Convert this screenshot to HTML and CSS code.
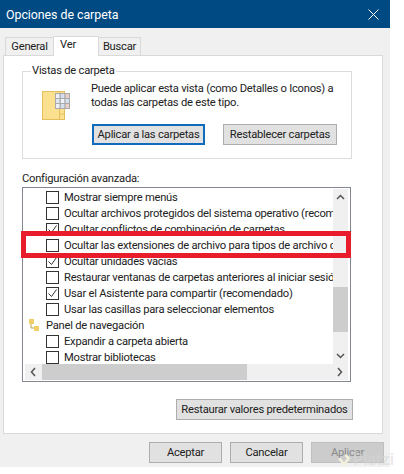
FILE: index.html
```html
<!DOCTYPE html>
<html lang="es">
<head>
    <meta charset="UTF-8">
    <title>Opciones de carpeta</title>
    <link rel="stylesheet" href="styles.css">
</head>
<body>
    <div class="window">
        <!-- Title bar -->
        <header class="titlebar">
            <span class="title">Opciones de carpeta</span>
            <svg class="close" width="11" height="11" viewBox="0 0 11 11"><path d="M.5.5l10 10M10.5.5l-10 10" stroke="#fff" stroke-width="1" fill="none"/></svg>
        </header>

        <!-- Tabs -->
        <div class="tabs">
            <span class="tab tab-general">General</span>
            <span class="tab tab-active">Ver</span>
            <span class="tab tab-buscar">Buscar</span>
        </div>

        <div class="panel">
            <!-- Folder views -->
            <fieldset class="views">
                <legend>Vistas de carpeta</legend>
                <div class="views-body">
                    <svg class="folder" width="32" height="32" viewBox="0 0 32 32">
                        <rect x="1.500" y="1.500" width="22" height="28" fill="#fbe08f" stroke="#e3c05c"/>
                        <path d="M18.500 2v27M19 24h4" stroke="#e3c05c" fill="none"/>
                        <rect x="14" y="3" width="15" height="16" fill="#a9a9a9"/>
                        <rect x="15" y="4" width="3.500" height="4" fill="#eef2f6"/><rect x="19.800" y="4" width="3.500" height="4" fill="#d5dfee"/><rect x="24.500" y="4" width="3.500" height="4" fill="#e8cfc8"/>
                        <rect x="15" y="9" width="3.500" height="4" fill="#dfe8f0"/><rect x="19.800" y="9" width="3.500" height="4" fill="#eef2f6"/><rect x="24.500" y="9" width="3.500" height="4" fill="#d5dfee"/>
                        <rect x="15" y="14" width="3.500" height="4" fill="#eef2f6"/><rect x="19.800" y="14" width="3.500" height="4" fill="#d5dfee"/><rect x="24.500" y="14" width="3.500" height="4" fill="#e8cfc8"/>
                    </svg>
                    <div class="views-right">
                        <p class="views-text">Puede aplicar esta vista (como Detalles o Iconos) a todas las carpetas de este tipo.</p>
                        <div class="views-buttons">
                            <button class="btn btn-focus">Aplicar a las carpetas</button>
                            <button class="btn">Restablecer carpetas</button>
                        </div>
                    </div>
                </div>
            </fieldset>

            <!-- Advanced settings -->
            <div class="adv-label">Configuración avanzada:</div>
            <div class="list">
                <div class="list-top">
                    <ul class="rows">
                        <li><i class="box"></i>Mostrar siempre menús</li>
                        <li><i class="box"></i>Ocultar archivos protegidos del sistema operativo (recomendado)</li>
                        <li><i class="box checked"><svg width="11" height="11" viewBox="0 0 11 11"><path d="M1.500 5.500l3 3 5-7" stroke="#333" fill="none"/></svg></i>Ocultar conflictos de combinación de carpetas</li>
                        <li><i class="box"></i>Ocultar las extensiones de archivo para tipos de archivo conocidos</li>
                        <li><i class="box checked"><svg width="11" height="11" viewBox="0 0 11 11"><path d="M1.500 5.500l3 3 5-7" stroke="#333" fill="none"/></svg></i>Ocultar unidades vacías</li>
                        <li><i class="box"></i>Restaurar ventanas de carpetas anteriores al iniciar sesión</li>
                        <li><i class="box checked"><svg width="11" height="11" viewBox="0 0 11 11"><path d="M1.500 5.500l3 3 5-7" stroke="#333" fill="none"/></svg></i>Usar el Asistente para compartir (recomendado)</li>
                        <li><i class="box"></i>Usar las casillas para seleccionar elementos</li>
                        <li class="group-row">
                            <svg class="tree" width="11" height="12" viewBox="0 0 11 12"><path d="M2 3v6h5" stroke="#b9a14e" fill="none"/><rect x="0" y="0" width="5" height="5" fill="#f0cf6b"/><rect x="5" y="7" width="5" height="5" fill="#f0cf6b"/></svg>
                            Panel de navegación
                        </li>
                        <li><i class="box"></i>Expandir a carpeta abierta</li>
                        <li><i class="box"></i>Mostrar bibliotecas</li>
                    </ul>
                    <div class="vscroll">
                        <svg width="15" height="16" viewBox="0 0 15 16"><path d="M4 10l3.500-3.500L11 10" stroke="#555" stroke-width="1.500" fill="none"/></svg>
                        <div class="vtrack"><div class="vthumb"></div></div>
                        <svg width="15" height="16" viewBox="0 0 15 16"><path d="M4 6l3.500 3.500L11 6" stroke="#555" stroke-width="1.500" fill="none"/></svg>
                    </div>
                </div>
                <div class="hscroll">
                    <svg width="17" height="16" viewBox="0 0 17 16"><path d="M10 4L6.500 8l3.500 4" stroke="#555" stroke-width="1.500" fill="none"/></svg>
                    <div class="htrack"><div class="hthumb"></div></div>
                    <svg width="17" height="16" viewBox="0 0 17 16"><path d="M7 4l3.500 4L7 12" stroke="#555" stroke-width="1.500" fill="none"/></svg>
                </div>
            </div>

            <div class="restore-row">
                <button class="btn btn-restore">Restaurar valores predeterminados</button>
            </div>
        </div>

        <!-- Dialog buttons -->
        <div class="actions">
            <button class="btn btn-action">Aceptar</button>
            <button class="btn btn-action">Cancelar</button>
            <button class="btn btn-action btn-disabled">Aplicar</button>
        </div>

        <div class="highlight"></div>
    </div>

    <div class="watermark">
        <svg width="12" height="12" viewBox="0 0 13 14"><path d="M1 5l5.500 7L12 5 8 1" stroke="#f3f1dc" stroke-width="3" fill="none"/></svg>
        <span>Platzi</span>
    </div>
</body>
</html>
```

FILE: styles.css
```css
/* Basic reset */
* {
    margin: 0;
    padding: 0;
    box-sizing: border-box;
}

body {
    font-family: Roboto, "Liberation Sans", sans-serif;
    font-size: 11.2px;
    letter-spacing: -0.24px;
    color: #222;
    background-color: #fff;
    overflow: hidden;
}

.window {
    position: relative;
    width: 390px;
    height: 467px;
    background-color: #f0f0f0;
}

/* Title bar */
.titlebar {
    height: 28px;
    padding: 0 11px 0 6px;
    display: flex;
    justify-content: space-between;
    align-items: center;
    background-color: #004a84;
    color: #fff;
}

.title {
    font-size: 12.4px;
    letter-spacing: -0.05px;
}

/* Tabs */
.tabs {
    height: 27px;
    padding: 7px 0 0 5px;
    display: flex;
    align-items: flex-end;
}

.tab {
    height: 18px;
    padding-top: 2px;
    text-align: center;
    background-color: #f0f0f0;
    border: 1px solid #d9d9d9;
    border-bottom: none;
}

.tab-general {
    width: 48px;
    border-right: none;
}

.tab-active {
    width: 46px;
    height: 20px;
    margin-bottom: -1px;
    padding: 1px 16px 0 0;
    background-color: #fff;
    position: relative;
}

.tab-buscar {
    width: 42px;
    border-left: none;
}

.panel {
    width: 380px;
    height: 379px;
    margin-left: 3px;
    padding: 8px 30px 0 18px;
    background-color: #fff;
    border: 1px solid #d9d9d9;
}

/* Folder views */
.views {
    height: 95px;
    border: 1px solid #dcdcdc;
    padding: 0 0 0 18px;
}

.views legend {
    margin-left: -10px;
    padding: 0 1px;
    line-height: 14px;
}

.views-body {
    display: flex;
    margin-top: 4px;
}

.folder {
    margin-top: 8px;
    flex-shrink: 0;
}

.views-right {
    margin-left: 18px;
}

.views-text {
    width: 256px;
    line-height: 14px;
}

.views-buttons {
    display: flex;
    gap: 18px;
    margin-top: 14px;
    margin-left: 1px;
}

.btn {
    height: 21px;
    font-family: inherit;
    font-size: 11.2px;
    letter-spacing: -0.24px;
    white-space: nowrap;
    color: #222;
    background-color: #e1e1e1;
    border: 1px solid #adadad;
}

.views-buttons .btn {
    width: 114px;
}

.views-buttons .btn-focus {
    width: 113px;
    border: 2px solid #0f6cbd;
}

/* Advanced settings */
.adv-label {
    margin-top: 12px;
    height: 16px;
    line-height: 16px;
}

.list {
    height: 195px;
    width: 329px;
    padding: 1px 2px 1px;
    background-color: #fff;
    border: 1px solid #828790;
}

.list-top {
    display: flex;
    height: 175px;
}

.rows {
    width: 310px;
    list-style: none;
    overflow: hidden;
    white-space: nowrap;
}

.rows li {
    height: 16px;
    display: flex;
    align-items: center;
    padding-left: 21px;
}

.rows .group-row {
    padding-left: 4px;
    gap: 6px;
}

.box {
    width: 13px;
    height: 13px;
    margin-right: 5px;
    flex-shrink: 0;
    display: flex;
    align-items: center;
    justify-content: center;
    border: 1px solid #333;
    background-color: #fff;
}

.tree {
    flex-shrink: 0;
}

.vscroll {
    width: 15px;
    display: flex;
    flex-direction: column;
    background-color: #f0f0f0;
}

.vtrack {
    flex: 1;
    padding-top: 82px;
}

.vthumb {
    height: 45px;
    background-color: #cdcdcd;
}

.hscroll {
    height: 16px;
    display: flex;
    background-color: #f0f0f0;
}

.htrack {
    flex: 1;
}

.hthumb {
    width: 205px;
    height: 16px;
    background-color: #cdcdcd;
}

.restore-row {
    display: flex;
    justify-content: flex-end;
    margin: 17px -1px 0 0;
}

.btn-restore {
    width: 177px;
}

/* Dialog buttons */
.actions {
    display: flex;
    justify-content: flex-end;
    gap: 8px;
    padding: 8px 6px 0 0;
}

.btn-action {
    width: 73px;
}

.btn-disabled {
    color: #8a8a8a;
    background-color: #ccc;
    border-color: #bfbfbf;
}

/* Red marker drawn over the list */
.highlight {
    position: absolute;
    left: 21px;
    top: 231px;
    width: 330px;
    height: 27px;
    border: 5px solid #e81c2b;
}

.watermark {
    position: absolute;
    left: 338px;
    top: 450px;
    display: flex;
    align-items: center;
    gap: 3px;
    font-size: 16px;
    font-weight: 700;
    letter-spacing: 0;
    color: rgba(215, 215, 215, 0.55);
}
```
